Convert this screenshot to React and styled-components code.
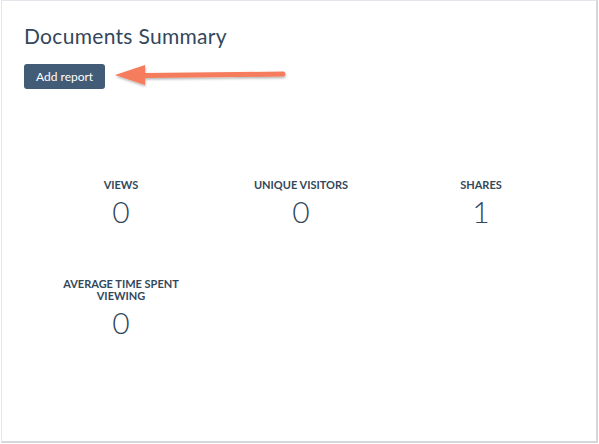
import React from 'react'
import styled, { createGlobalStyle } from 'styled-components'

const Global = createGlobalStyle`
  body {
    margin: 0;
    background: #fff;
    font-family: Lato, "Open Sans", sans-serif;
  }
`

const Card = styled.div`
  box-sizing: border-box;
  width: 597px;
  height: 443px;
  margin-left: 1px;
  background: #fff;
  border: 1px solid #e3e7ec;
  border-bottom: 2px solid #d4d8dc;
  border-right: 2px solid #d4d8dc;
  padding: 22px 22px 0;
`

const Title = styled.h2`
  margin: 0;
  font-size: 21px;
  font-weight: 400;
  color: #33475b;
  letter-spacing: 0.3px;
  line-height: 26px;
`

const Toolbar = styled.div`
  display: flex;
  align-items: center;
  margin-top: 13px;
  gap: 6px;
`

const Button = styled.button`
  height: 25px;
  padding: 0 12px;
  border: none;
  border-radius: 3px;
  background: #425b76;
  color: #fff;
  font-family: inherit;
  font-size: 12px;
  cursor: pointer;
`

const Stats = styled.div`
  display: grid;
  grid-template-columns: repeat(3, 180px);
  row-gap: 51px;
  margin-top: 89px;
  margin-left: 7px;
`

const Stat = styled.div`
  display: flex;
  flex-direction: column;
  align-items: center;
  text-align: center;
  color: #33475b;
`

const Label = styled.div`
  font-size: 11px;
  font-weight: 700;
  line-height: 12px;
  text-transform: uppercase;
  width: 140px;
`

const Value = styled.div`
  font-size: 30px;
  font-weight: 300;
  line-height: 32px;
  margin-top: 4px;
`

const Arrow = () => (
  <svg width="182" height="28" viewBox="0 0 182 28">
    <defs>
      <filter id="sh" x="-10%" y="-50%" width="120%" height="200%">
        <feDropShadow dx="0.5" dy="1.5" stdDeviation="1" floodColor="#000" floodOpacity="0.3" />
      </filter>
    </defs>
    <g filter="url(#sh)" fill="#f57c5b">
      <path d="M173 9.5 L34 11 L34 3 L4 13 L34 23 L34 16 L173 14.5 Q176 12 173 9.5 Z" />
    </g>
  </svg>
)

const stats = [
  { label: 'Views', value: 0 },
  { label: 'Unique visitors', value: 0 },
  { label: 'Shares', value: 1 },
  { label: 'Average time spent viewing', value: 0 },
]

export default function App() {
  return (
    <>
      <Global />
      <Card>
        <Title>Documents Summary</Title>
        <Toolbar>
          <Button>Add report</Button>
          <Arrow />
        </Toolbar>
        <Stats>
          {stats.map((s) => (
            <Stat key={s.label}>
              <Label>{s.label}</Label>
              <Value>{s.value}</Value>
            </Stat>
          ))}
        </Stats>
      </Card>
    </>
  )
}
